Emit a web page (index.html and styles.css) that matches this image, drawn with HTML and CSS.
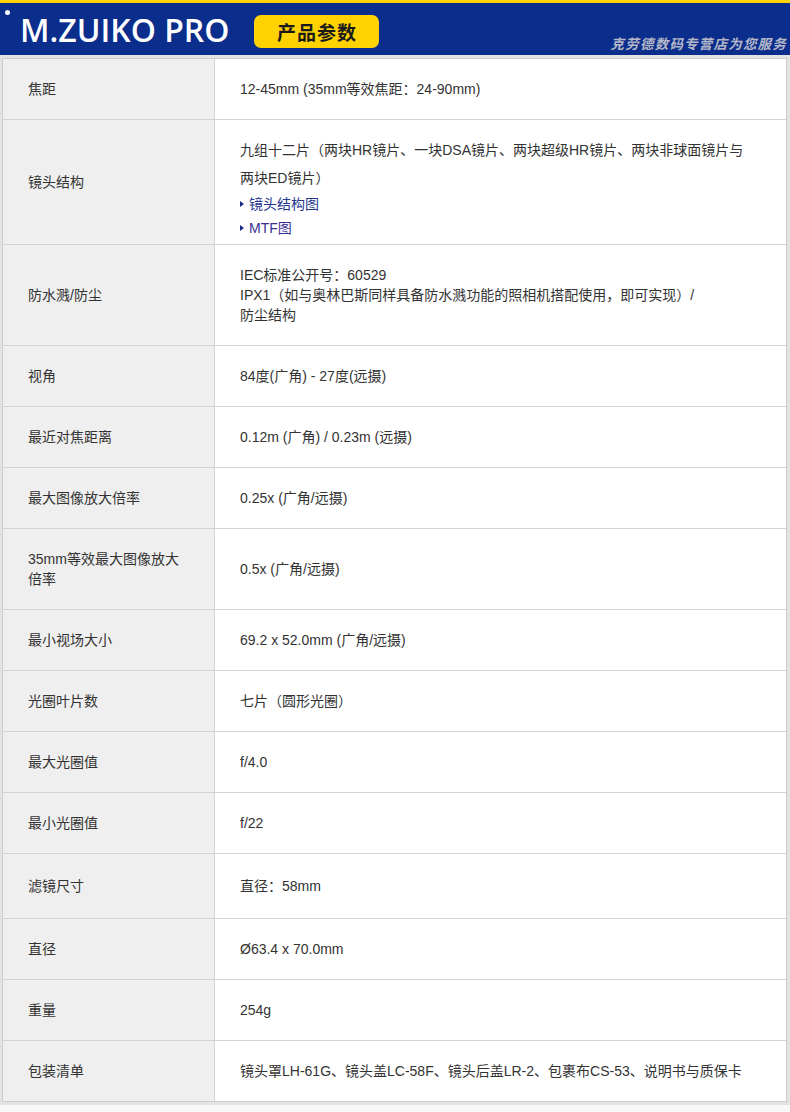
FILE: index.html
```html
<!DOCTYPE html>
<html lang="zh-CN">
<head>
<meta charset="utf-8">
<title>M.ZUIKO PRO 产品参数</title>
<link rel="stylesheet" href="styles.css">
</head>
<body>
<header class="banner">
  <span class="dot"></span>
  <h1 class="brand">M.ZUIKO PRO</h1>
  <span class="pill">产品参数</span>
  <span class="slogan">克劳德数码专营店为您服务</span>
</header>
<main class="frame">
  <div class="spec">
    <div class="row"><div class="label">焦距</div><div class="value">12-45mm (35mm等效焦距：24-90mm)</div></div>
    <div class="row"><div class="label">镜头结构</div><div class="value value-multi">
      <div class="block">
        <p class="desc">九组十二片（两块HR镜片、一块DSA镜片、两块超级HR镜片、两块非球面镜片与两块ED镜片）</p>
        <ul class="links">
          <li><span class="tri"></span><a class="link">镜头结构图</a></li>
          <li><span class="tri"></span><a class="link link-mtf">MTF图</a></li>
        </ul>
      </div>
    </div></div>
    <div class="row"><div class="label">防水溅/防尘</div><div class="value">IEC标准公开号：60529<br>IPX1（如与奥林巴斯同样具备防水溅功能的照相机搭配使用，即可实现）/<br>防尘结构</div></div>
    <div class="row"><div class="label">视角</div><div class="value">84度(广角) - 27度(远摄)</div></div>
    <div class="row"><div class="label">最近对焦距离</div><div class="value">0.12m (广角) / 0.23m (远摄)</div></div>
    <div class="row"><div class="label">最大图像放大倍率</div><div class="value">0.25x (广角/远摄)</div></div>
    <div class="row"><div class="label">35mm等效最大图像放大倍率</div><div class="value">0.5x (广角/远摄)</div></div>
    <div class="row"><div class="label">最小视场大小</div><div class="value">69.2 x 52.0mm (广角/远摄)</div></div>
    <div class="row"><div class="label">光圈叶片数</div><div class="value">七片（圆形光圈）</div></div>
    <div class="row"><div class="label">最大光圈值</div><div class="value">f/4.0</div></div>
    <div class="row"><div class="label">最小光圈值</div><div class="value">f/22</div></div>
    <div class="row row-tall"><div class="label">滤镜尺寸</div><div class="value">直径：58mm</div></div>
    <div class="row"><div class="label">直径</div><div class="value">Ø63.4 x 70.0mm</div></div>
    <div class="row"><div class="label">重量</div><div class="value">254g</div></div>
    <div class="row"><div class="label">包装清单</div><div class="value">镜头罩LH-61G、镜头盖LC-58F、镜头后盖LR-2、包裹布CS-53、说明书与质保卡</div></div>
  </div>
</main>
</body>
</html>
```

FILE: styles.css
```css
* { box-sizing: border-box; }
html, body { margin: 0; padding: 0; }
body {
  width: 790px;
  background: #f8f8f8;
  font-family: "Liberation Sans", "Noto Sans CJK SC", sans-serif;
  font-size: 14px;
  color: #333;
}

.banner {
  position: relative;
  height: 55px;
  background: #0b2d8b;
  border-top: 3px solid #ffd200;
  display: flex;
  align-items: center;
  padding-left: 20px;
}
.dot {
  position: absolute;
  left: 5px;
  top: 7px;
  width: 5px;
  height: 5px;
  border-radius: 50%;
  background: #fff;
}
.brand {
  margin: 0;
  font-family: "Open Sans", "Liberation Sans", sans-serif;
  font-weight: 600;
  font-size: 32px;
  line-height: 1;
  color: #fff;
  letter-spacing: 0;
  padding-top: 2px;
}
.pill {
  margin-left: 25px;
  margin-top: 5px;
  width: 125px;
  height: 33px;
  border-radius: 7px;
  background: #ffd200;
  color: #1a1a1a;
  font-family: "Noto Sans CJK SC", sans-serif;
  font-weight: 700;
  font-size: 19px;
  display: flex;
  align-items: center;
  justify-content: center;
  letter-spacing: 1px;
}
.slogan {
  margin-left: auto;
  margin-right: 3px;
  align-self: flex-end;
  margin-bottom: 2px;
  font-family: "Noto Sans CJK SC", serif;
  font-style: italic;
  font-weight: 700;
  font-size: 13.5px;
  letter-spacing: 1.2px;
  color: #b4b8c8;
}

.frame {
  background: #e3e3e3;
  padding: 3px 3px 3px 2px;
}
.spec {
  border: 1px solid #cdcdcd;
  background: #fff;
}
.row {
  display: grid;
  grid-template-columns: 212px 1fr;
  border-bottom: 1px solid #d3d3d3;
}
.row:last-child { border-bottom: none; }
.label {
  background: #efefef;
  border-right: 1px solid #d3d3d3;
  padding: 20px 30px 20px 25px;
  line-height: 20px;
  display: flex;
  align-items: center;
}
.value {
  padding: 20px 35px 20px 25px;
  line-height: 20px;
  display: flex;
  flex-direction: column;
  justify-content: center;
}
.row-tall .value { padding-top: 22px; padding-bottom: 22px; }
.value-multi {
  padding-top: 16px;
  padding-bottom: 4px;
  justify-content: flex-start;
}
.desc {
  margin: 0;
  line-height: 28px;
}
.links {
  list-style: none;
  margin: 0;
  padding: 0;
}
.links li {
  line-height: 24px;
  display: flex;
  align-items: center;
}
.tri {
  width: 0;
  height: 0;
  border-top: 3.5px solid transparent;
  border-bottom: 3.5px solid transparent;
  border-left: 4px solid #1b2a84;
  margin-right: 5px;
}
.link {
  color: #25358f;
  text-decoration: none;
}
.link-mtf { color: #3a2f93; }
```
